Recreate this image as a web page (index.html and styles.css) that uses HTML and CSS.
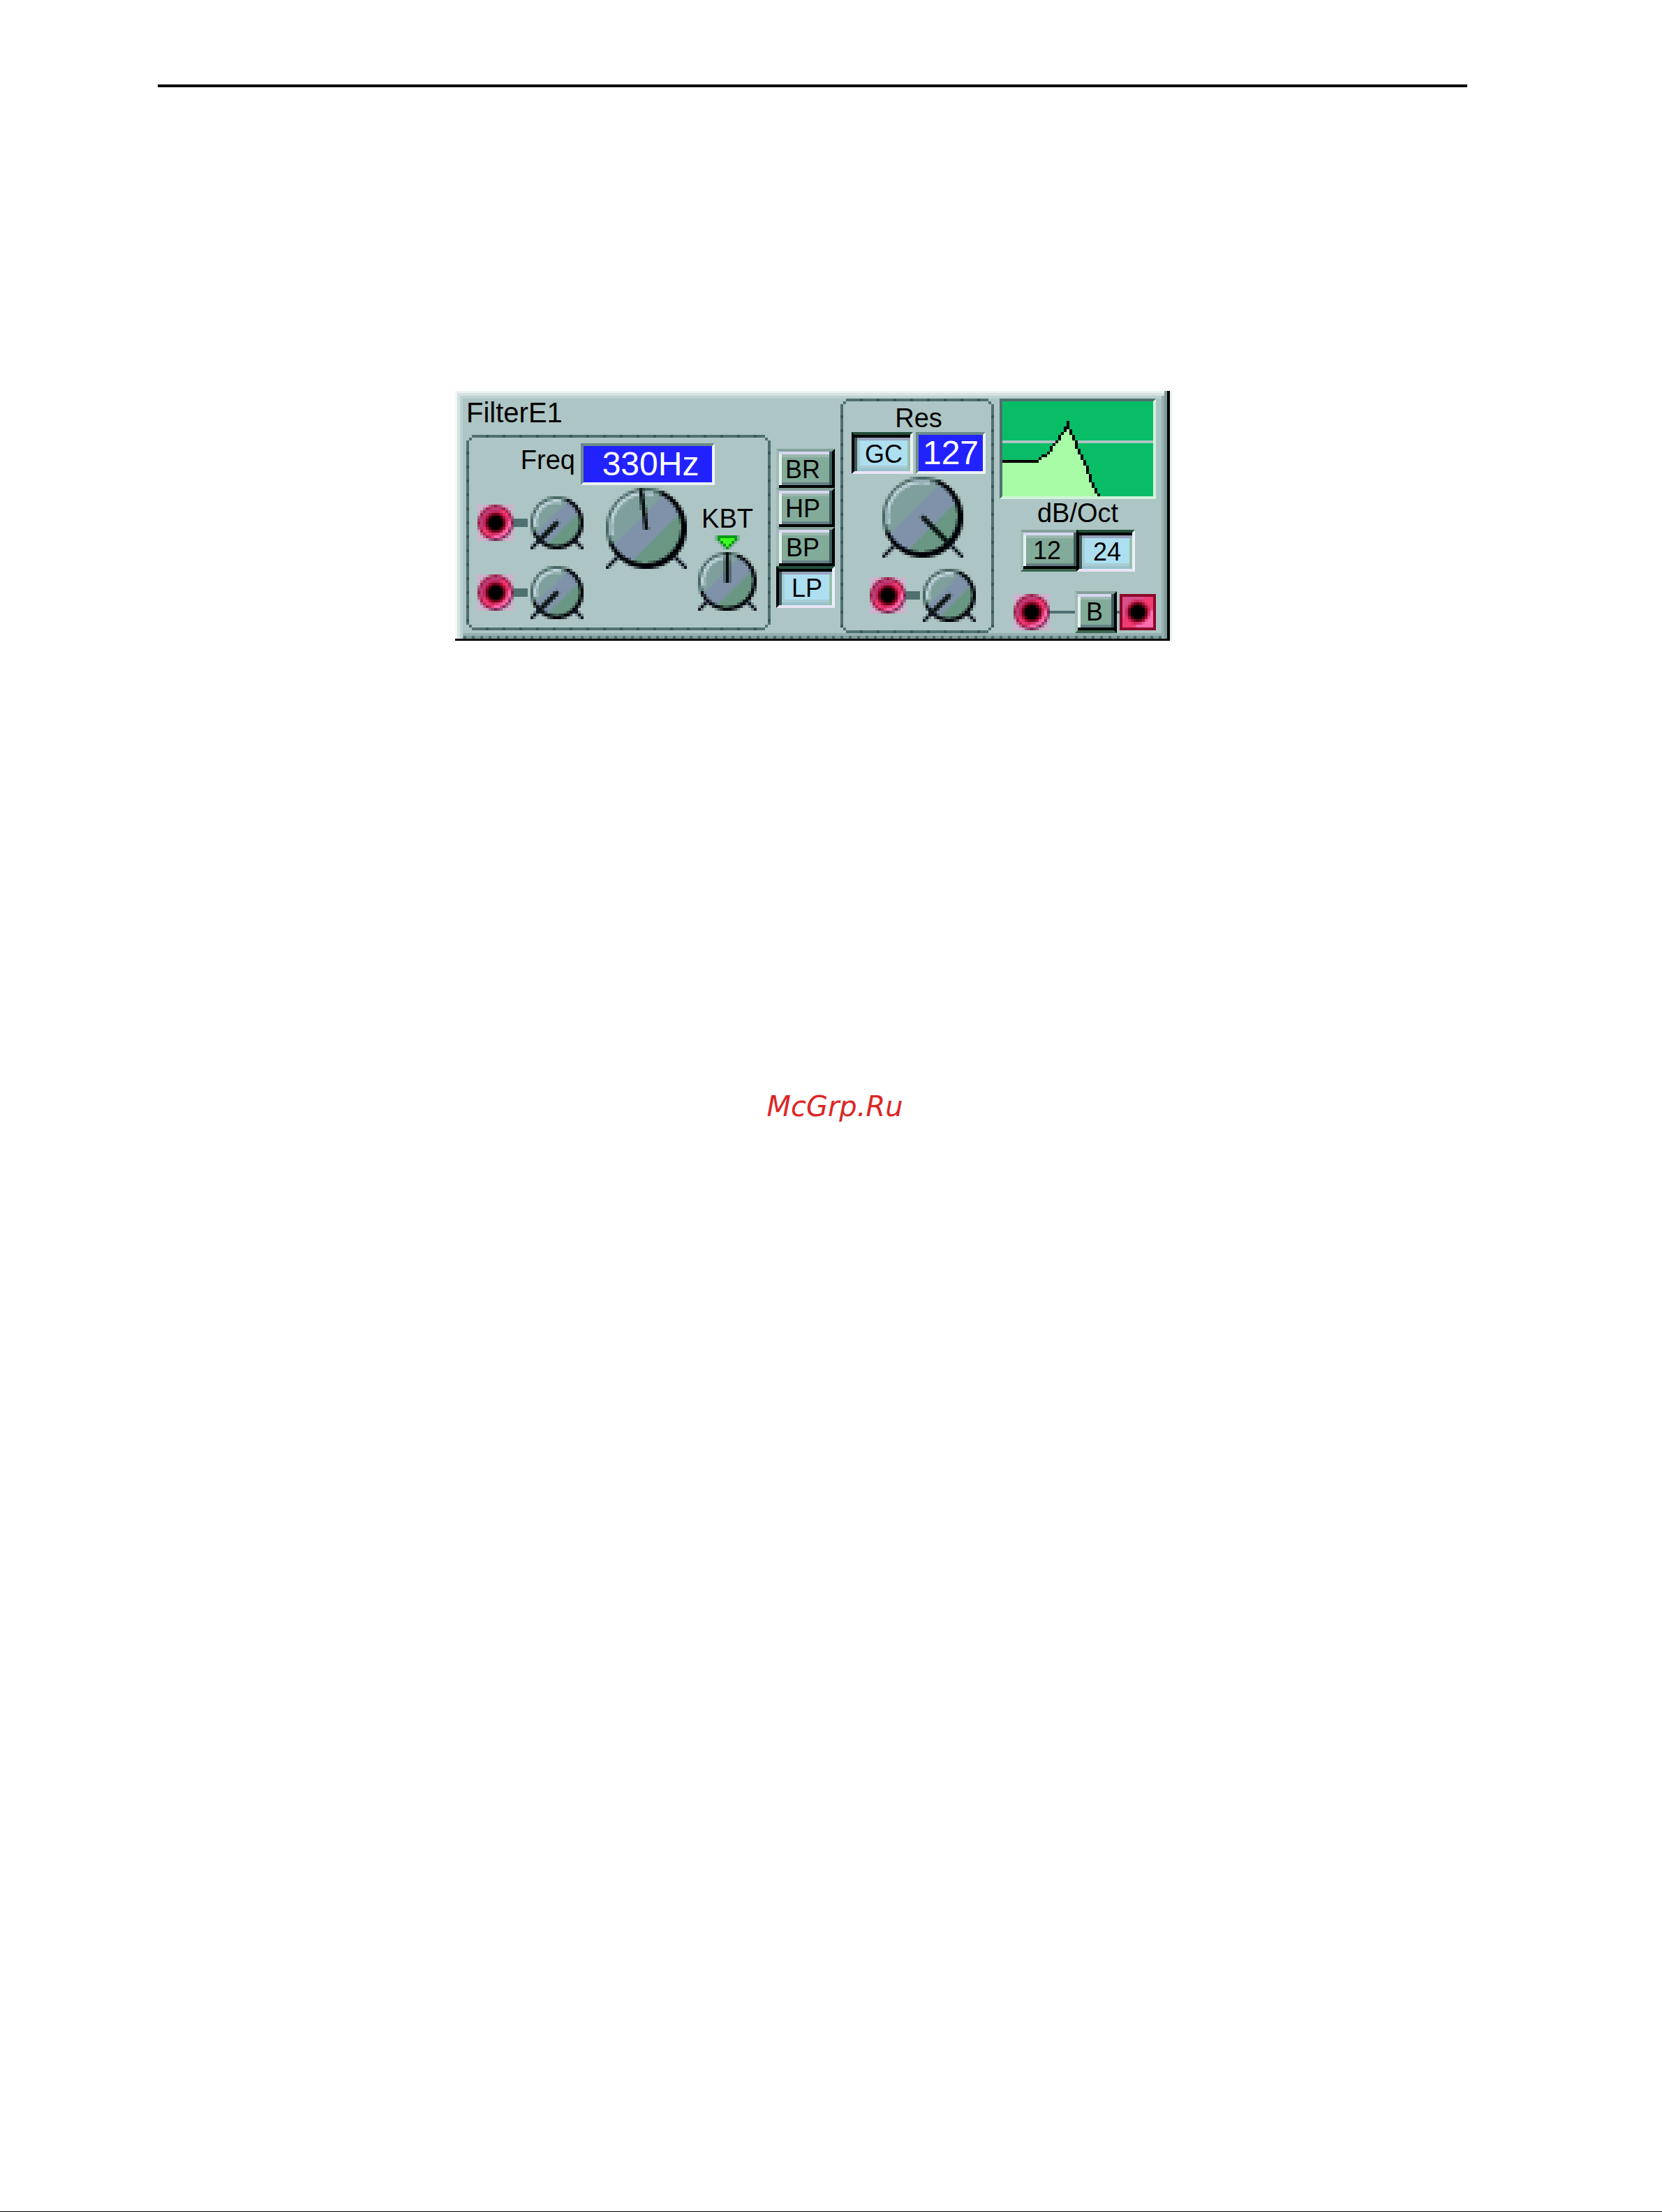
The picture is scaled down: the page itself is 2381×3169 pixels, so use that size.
FILE: index.html
```html
<!DOCTYPE html>
<html lang="en">
  <head>
    <meta charset="UTF-8" />
    <meta name="viewport" content="width=device-width, initial-scale=1.0" />
    <title>FilterE1</title>
    <link rel="stylesheet" href="styles.css">
  </head>
  <body>
    <main class="page">
      <hr class="rule" />
      <section class="module">
        <div class="freq-side">
          <h1 class="title">FilterE1</h1>
          <div class="panel freq-panel">
            <div class="freq-head">
              <label class="label" for="freq">Freq</label>
              <output class="display display-wide" for="freq">330Hz</output>
            </div>
            <div class="freq-body">
              <div class="mods">
                <div class="mod">
                  <svg class="jack" data-jack="round"></svg>
                  <span class="wire"></span>
                  <div class="knob knob-small">
                    <svg data-knob="19" data-angle="225"></svg>
                    <input type="range" min="0" max="127" value="0" aria-label="Freq mod 1" />
                  </div>
                </div>
                <div class="mod">
                  <svg class="jack" data-jack="round"></svg>
                  <span class="wire"></span>
                  <div class="knob knob-small">
                    <svg data-knob="19" data-angle="225"></svg>
                    <input type="range" min="0" max="127" value="0" aria-label="Freq mod 2" />
                  </div>
                </div>
              </div>
              <div class="knob knob-big freq-knob">
                <svg data-knob="29" data-angle="352"></svg>
                <input id="freq" type="range" min="0" max="127" value="60" />
              </div>
              <div class="kbt">
                <label class="label" for="kbt">KBT</label>
                <svg class="arrow" viewBox="0 0 9 5" shape-rendering="crispEdges">
                  <path fill="#7fae98" d="M0 0h9v2h-1v1h-1v1h-1v1H3V4H2V3H1V2H0z" />
                  <path fill="#0c9a14" d="M1 0h7v2H7v1H6v1H5v1H4V4H3V3H2V2H1z" />
                  <path fill="#3dff1f" d="M2 1h5v1H6v1H5v1H4V3H3V2H2z" />
                </svg>
                <div class="knob knob-mid">
                  <svg data-knob="21" data-angle="0"></svg>
                  <input id="kbt" type="range" min="0" max="127" value="64" />
                </div>
              </div>
            </div>
          </div>
        </div>

        <div class="types">
          <button class="btn" type="button">BR</button>
          <button class="btn" type="button">HP</button>
          <button class="btn" type="button">BP</button>
          <button class="btn on" type="button" aria-pressed="true">LP</button>
        </div>

        <div class="panel res-panel">
          <label class="label" for="res">Res</label>
          <div class="res-head">
            <button class="btn btn-gc on" type="button" aria-pressed="true">GC</button>
            <output class="display display-narrow" for="res">127</output>
          </div>
          <div class="res-body">
            <div class="knob knob-big">
              <svg data-knob="29" data-angle="135"></svg>
              <input id="res" type="range" min="0" max="127" value="127" />
            </div>
            <div class="mod">
              <svg class="jack" data-jack="round"></svg>
              <span class="wire"></span>
              <div class="knob knob-small">
                <svg data-knob="19" data-angle="225"></svg>
                <input type="range" min="0" max="127" value="0" aria-label="Res mod" />
              </div>
            </div>
          </div>
        </div>

        <div class="out">
          <div class="graph">
            <svg viewBox="0 0 54 34" shape-rendering="crispEdges">
              <path fill="#08bd66" d="M0 0h54v34H0z" />
              <path fill="#adc5c4" d="M0 14h54v1H0z" />
              <path fill="#a8fca5" d="M0 21h13v-1h1v-1h2v-1h1v-2h1v-1h1v-1h1v-2h1v-1h1V9h1V8h1v2h1v2h1v2h1v3h1v2h1v2h1v2h1v3h1v3h1v2h1v2h1v1H0z" />
              <path stroke="#000" fill="none" d="M0 21.5h13M13.5 20v1M14 19.5h2M16.5 18v1M17.5 16v2M18.5 15v1M19.5 14v1M20.5 12v2M21.5 11v1M22.5 9v2M23.5 7v3M24.5 10v2M25.5 12v2M26.5 14v3M27.5 17v2M28.5 19v2M29.5 21v2M30.5 23v3M31.5 26v3M32.5 29v2M33.5 31v2M34.5 33v1" />
            </svg>
          </div>
          <span class="label">dB/Oct</span>
          <div class="slope">
            <button class="btn" type="button">12</button>
            <button class="btn on" type="button" aria-pressed="true">24</button>
          </div>
          <div class="io">
            <svg class="jack" data-jack="round"></svg>
            <span class="line"></span>
            <button class="btn btn-b" type="button">B</button>
            <span class="line line-short"></span>
            <svg class="jack" data-jack="square"></svg>
          </div>
        </div>
      </section>
      <p class="mark">McGrp.Ru</p>
    </main>
    <script src="sprites.js"></script>
  </body>
</html>
```
FILE: styles.css
```css
* {
  box-sizing: border-box;
}
body {
  margin: 0;
  background: #fff;
  color: #000;
  font-family: "Liberation Sans", Arial, sans-serif;
}
svg {
  display: block;
}
.page {
  min-height: 100vh;
  padding: 121px 279px 0 226px;
  border-bottom: 1px solid #000;
}
.rule {
  height: 4px;
  margin: 0 0 435px;
  border: 0;
  background: #000;
}

/* module frame */
.module {
  display: flex;
  gap: 8px;
  width: fit-content;
  margin: 0 auto;
  padding: 11px 20px 11px 16px;
  background:
    repeating-linear-gradient(90deg, #4f6e6e 0 4px, #7f9b9a 4px 12px) 0 calc(100% - 3px) / 100% 4px no-repeat,
    linear-gradient(#96b0af, #96b0af) 0 calc(100% - 7px) / 100% 4px no-repeat,
    #adc5c4;
  box-shadow:
    3px 0 #eaf3f1,
    inset 0 -3px #000,
    inset -4px 0 #000,
    inset -8px 0 #7f9b9a,
    inset 0 3px #eaf3f1,
    inset 3px 0 #f0f7f5,
    inset 0 7px #d4e4e1,
    inset 7px 0 #d4e4e1,
    inset -12px 0 #96b0af,
    inset 0 11px #bdd2d0,
    inset 11px 0 #bdd2d0;
}
.title {
  height: 52px;
  margin: 0;
  font-size: 40px;
  font-weight: 400;
  line-height: 40px;
}
.label {
  font-size: 38px;
  line-height: 40px;
  text-align: center;
}

/* dotted outline with stepped corners */
.panel {
  background:
    linear-gradient(#507070, #507070) 4px 4px / 4px 4px no-repeat,
    linear-gradient(#507070, #507070) calc(100% - 4px) 4px / 4px 4px no-repeat,
    linear-gradient(#507070, #507070) 4px calc(100% - 4px) / 4px 4px no-repeat,
    linear-gradient(#507070, #507070) calc(100% - 4px) calc(100% - 4px) / 4px 4px no-repeat,
    repeating-linear-gradient(90deg, #507070 0 20px, #3a5757 20px 24px) 8px 0 / calc(100% - 16px) 4px no-repeat,
    repeating-linear-gradient(90deg, #507070 0 20px, #3a5757 20px 24px) 8px 100% / calc(100% - 16px) 4px no-repeat,
    repeating-linear-gradient(#507070 0 16px, #3a5757 16px 20px) 0 8px / 4px calc(100% - 16px) no-repeat,
    repeating-linear-gradient(#507070 0 16px, #3a5757 16px 20px) 100% 8px / 4px calc(100% - 16px) no-repeat;
}

/* freq */
.freq-panel {
  padding: 12px 20px 16px 16px;
}
.freq-head {
  display: flex;
  justify-content: flex-end;
  gap: 8px;
  padding-right: 60px;
}
.freq-head .label {
  margin-top: 4px;
}
.freq-body {
  display: flex;
  align-items: flex-start;
}
.freq-knob {
  margin: 4px 16px 0 32px;
}
.mods {
  display: flex;
  flex-direction: column;
  gap: 24px;
  padding-top: 16px;
}
.mod {
  display: flex;
  align-items: center;
}
.wire {
  width: 20px;
  height: 12px;
  margin-right: 4px;
  background: #507070;
}
.kbt {
  display: flex;
  flex-direction: column;
  align-items: center;
  gap: 4px;
  padding-top: 28px;
}
.arrow {
  width: 36px;
  height: 20px;
}

.display {
  height: 60px;
  border: 4px solid;
  border-color: #6b8b8b #ecf2f2 #ecf2f2 #6b8b8b;
  background: #2222ff;
  color: #fff;
  font-size: 48px;
  line-height: 52px;
  text-align: center;
}
.display-wide {
  width: 192px;
  padding-left: 8px;
}
.display-narrow {
  width: 100px;
}

/* knobs and jacks */
.knob {
  position: relative;
}
.knob svg {
  width: 100%;
  height: 100%;
}
.knob input {
  position: absolute;
  inset: 0;
  width: 100%;
  height: 100%;
  margin: 0;
  opacity: 0;
  cursor: pointer;
}
.knob-small {
  width: 76px;
  height: 76px;
}
.knob-mid {
  width: 84px;
  height: 84px;
}
.knob-big {
  width: 116px;
  height: 116px;
}
.jack {
  width: 52px;
  height: 52px;
}

/* buttons */
.btn {
  width: 84px;
  height: 60px;
  padding: 0 8px 0 0;
  border: 4px solid;
  border-color: #82a199 #000 #3c6650 #9fbbb5;
  background: #82ab9a;
  box-shadow:
    inset 0 -4px #000,
    inset -4px 0 #3c5c5c,
    inset 0 4px #d8d8f0,
    inset 4px 0 #e4f0ee,
    inset 0 -8px #647f84,
    inset 0 8px #9cb8b0;
  color: #000;
  font-family: inherit;
  font-size: 36px;
  line-height: 44px;
  text-align: center;
  cursor: pointer;
}
.btn.on {
  padding: 4px 0 0 4px;
  border-color: #24503c #ecf0fa #e8e4f6 #000;
  background: #addff0;
  box-shadow:
    inset 0 4px #000,
    inset 4px 0 #3c5858,
    inset 0 8px #98a4bc,
    inset -4px 0 #98c0a8,
    inset 0 -4px #98c4cc,
    inset 8px 0 #a8ccd4,
    inset 0 -8px #a8ccd4;
}
.types {
  display: flex;
  flex-direction: column;
  padding-top: 72px;
}
.types .btn {
  margin-bottom: -4px;
}
.btn-gc {
  width: 88px;
}
.btn-b {
  width: 60px;
  padding-right: 4px;
}

/* res */
.res-panel {
  display: flex;
  flex-direction: column;
  padding: 8px 12px 16px 16px;
}
.res-head {
  display: flex;
  gap: 4px;
}
.res-body {
  display: flex;
  flex-direction: column;
  align-items: center;
  gap: 16px;
  padding: 4px 0 0 12px;
}

/* output */
.out {
  display: flex;
  flex-direction: column;
}
.graph {
  width: 224px;
  height: 144px;
  border: 4px solid;
  border-color: #507070 #d0f2d8 #d0f2d8 #507070;
}
.slope {
  display: flex;
  justify-content: center;
  margin: 4px 0 28px;
}
.slope .on {
  margin-left: -4px;
}
.io {
  display: flex;
  align-items: center;
  justify-content: flex-end;
}
.line {
  width: 36px;
  height: 4px;
  background: #507070;
}
.line-short {
  width: 4px;
}

.mark {
  margin: 643px 0 0;
  padding-left: 64px;
  color: #dc2626;
  font-family: "DejaVu Sans", sans-serif;
  font-size: 40px;
  font-style: italic;
  line-height: 48px;
  text-align: center;
}
```
FILE: sprites.js
```js
// knobs and jacks are drawn on a coarse grid, one rect per cell
const BG = [173, 197, 196];

function draw(svg, n, colorAt) {
  const steps = [1 / 6, 1 / 2, 5 / 6];
  let cells = '';
  for (let y = 0; y < n; y++) {
    for (let x = 0; x < n; x++) {
      const sum = [0, 0, 0];
      steps.forEach((sy) => {
        steps.forEach((sx) => {
          const c = colorAt(x + sx - n / 2, y + sy - n / 2);
          c.forEach((v, i) => (sum[i] += v / 9));
        });
      });
      const rgb = sum.map(Math.round).join(',');
      cells += `<rect x="${x}" y="${y}" width="1" height="1" fill="rgb(${rgb})"/>`;
    }
  }
  svg.setAttribute('viewBox', `0 0 ${n} ${n}`);
  svg.setAttribute('shape-rendering', 'crispEdges');
  svg.innerHTML = cells;
}

function knob(n, angle) {
  const R = n / 2;
  const a = (angle * Math.PI) / 180;
  const dx = Math.sin(a);
  const dy = -Math.cos(a);
  const extra = n > 25 ? 1.3 : 0.5;
  return (u, v) => {
    const r = Math.hypot(u, v);
    const t = (u + v) / (r * Math.SQRT2 || 1);
    // legs
    if (v > 0 && r > R - 0.5 && Math.abs(Math.abs(u) - v) < 0.8) return [16, 22, 38];
    if (r > R) return BG;
    // pointer
    const along = u * dx + v * dy;
    const off = Math.abs(u * dy - v * dx);
    if (along > -0.4 && along < R && off < 0.75) return [4, 14, 12];
    const inner = R - 1 - (extra * (t + 1)) / 2;
    if (r > inner) return t < -0.4 ? [72, 104, 100] : [0, 4, 8];
    if (t < -0.55 && r > inner - 1.3) return [190, 210, 218];
    const s = (u + v) / R;
    if (s < -0.4) return [127, 159, 157];
    if (s < 0.45) return [127, 146, 169];
    return [106, 151, 131];
  };
}

function jack(square) {
  return (u, v) => {
    const r = Math.hypot(u, v);
    const t = (u + v) / (r * Math.SQRT2 || 1);
    const edge = square ? Math.max(Math.abs(u), Math.abs(v)) : r;
    if (r < 2.6) return [0, 0, 0];
    if (r < 3.4) return [96, 0, 18];
    if (r < 4.2) return [190, 20, 70];
    if (edge < 5.5) {
      if (t > 0.6) return [255, 110, 175];
      if (t < -0.4) return square ? [215, 80, 135] : [190, 62, 120];
      return [240, 58, 115];
    }
    if (edge < 6.4) return square ? [140, 8, 44] : t > 0.3 ? [120, 36, 78] : [155, 30, 70];
    return square ? [140, 8, 44] : [205, 178, 204];
  };
}

document.querySelectorAll('[data-knob]').forEach((el) => {
  const n = Number(el.dataset.knob);
  draw(el, n, knob(n, Number(el.dataset.angle)));
});
document.querySelectorAll('[data-jack]').forEach((el) => {
  draw(el, 13, jack(el.dataset.jack === 'square'));
});
```
